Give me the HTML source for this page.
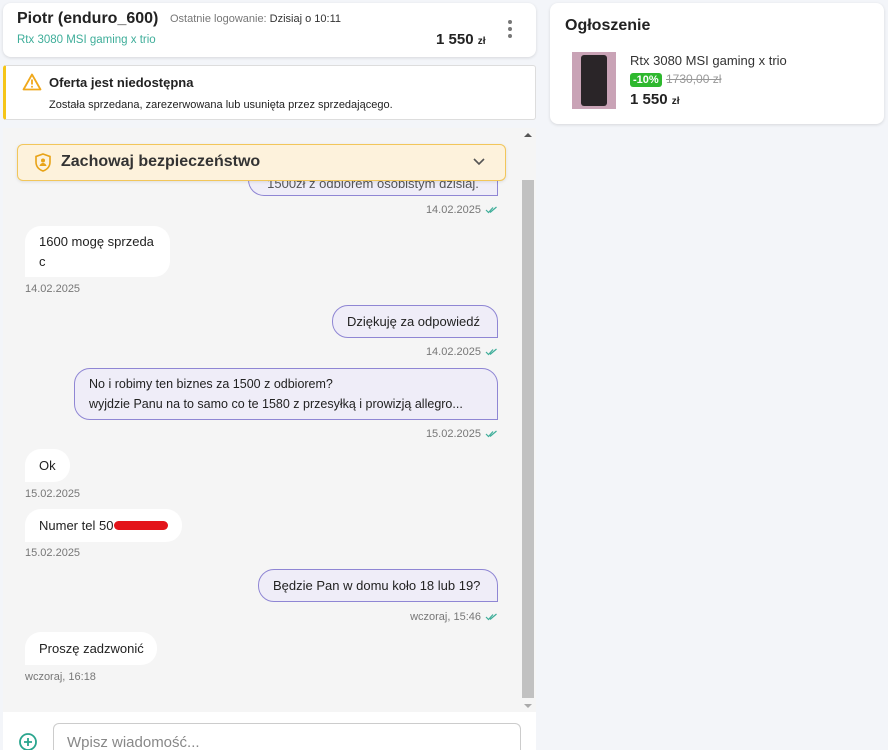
<!DOCTYPE html>
<html><head><meta charset="utf-8"><style>
*{box-sizing:border-box;margin:0;padding:0}
html{width:888px;height:750px;overflow:hidden}
body{width:888px;height:750px;background:#f3f5f9;font-family:"Liberation Sans",sans-serif;color:#222;position:relative;overflow:hidden;font-size:14px}
.a{position:absolute;white-space:nowrap}
.card{background:#fff;border-radius:8px;box-shadow:0 1px 3px rgba(0,0,0,.12)}
.bl{position:absolute;white-space:nowrap;background:#fff;border-radius:16px 16px 16px 0;padding:0 14px;font-size:13px;line-height:20px;display:flex;align-items:center;color:#222}
.br{position:absolute;white-space:nowrap;background:#efedf8;border:1px solid #8f86d4;border-radius:16px 16px 0 16px;padding:0 14px;font-size:13px;line-height:20px;display:flex;align-items:center;color:#222}
.ts{position:absolute;font-size:11px;color:#777}
.tsr{position:absolute;font-size:11px;color:#777;text-align:right;width:200px}
.ck{display:inline-block;margin-left:4px;vertical-align:middle}
</style></head><body>
<div class="a card" style="left:3px;top:3px;width:533px;height:54px"></div>
<div class="a" style="left:17px;top:10px;font-size:16px;font-weight:bold;color:#222">Piotr (enduro_600)</div>
<div class="a" style="left:170px;top:13px;font-size:11px;color:#777">Ostatnie logowanie: <span style="color:#333">Dzisiaj o 10:11</span></div>
<div class="a" style="left:17px;top:34px;font-size:11.5px;color:#3fae9a">Rtx 3080 MSI gaming x trio</div>
<div class="a" style="left:436px;top:31px;font-size:15px;font-weight:bold">1 550 <span style="font-size:10px">zł</span></div>
<div class="a" style="left:508px;top:20px;width:4px;height:4px;border-radius:2px;background:#777;box-shadow:0 7px 0 #777,0 14px 0 #777"></div>

<div class="a" style="left:3px;top:65px;width:533px;height:55px;background:#fff;border:1px solid #ddd;border-left:3px solid #f5c518;border-radius:3px"></div>
<svg class="a" style="left:22px;top:73px" width="20" height="18" viewBox="0 0 20 18"><path d="M10 1.5L18.5 16.5H1.5Z" fill="none" stroke="#f0a81b" stroke-width="1.8" stroke-linejoin="round"/><path d="M10 6.5v5" stroke="#f0a81b" stroke-width="1.8"/><circle cx="10" cy="13.8" r="1" fill="#f0a81b"/></svg>
<div class="a" style="left:49px;top:75px;font-size:13px;font-weight:bold;color:#222">Oferta jest niedostępna</div>
<div class="a" style="left:49px;top:99px;font-size:11px;color:#222">Została sprzedana, zarezerwowana lub usunięta przez sprzedającego.</div>

<div class="a card" style="left:550px;top:3px;width:334px;height:121px"></div>
<div class="a" style="left:565px;top:17px;font-size:16px;font-weight:bold;color:#222">Ogłoszenie</div>
<div class="a" style="left:572px;top:52px;width:44px;height:57px;background:#c9a3b6"><div style="margin:3px 9px;width:26px;height:51px;background:#2a2528;border-radius:3px"></div></div>
<div class="a" style="left:630px;top:53px;font-size:13px;color:#333">Rtx 3080 MSI gaming x trio</div>
<div class="a" style="left:630px;top:73px;background:#2eb82e;color:#fff;font-size:11px;font-weight:bold;padding:0 3px;border-radius:3px;line-height:14px">-10%</div>
<div class="a" style="left:666px;top:72px;font-size:12px;color:#999;text-decoration:line-through">1730,00 zł</div>
<div class="a" style="left:630px;top:91px;font-size:15px;font-weight:bold">1 550 <span style="font-size:10px">zł</span></div>

<div class="a" style="left:3px;top:128px;width:533px;height:584px;background:#f5f5f5"></div>
<div class="a" style="left:522px;top:180px;width:12px;height:518px;background:#c1c1c1"></div>
<div class="a" style="left:524px;top:133px;width:0;height:0;border:4px solid transparent;border-bottom-color:#555;border-top:0"></div>
<div class="a" style="left:524px;top:704px;width:0;height:0;border:4px solid transparent;border-top-color:#aaa;border-bottom:0"></div>

<div class="br" style="left:248px;top:165px;width:250px;height:31px;border-top:none;border-radius:0 0 0 16px;justify-content:center;color:#555;padding-top:8px">1500zł z odbiorem osobistym dzisiaj.</div>
<div class="tsr" style="left:298px;top:204px">14.02.2025<svg class="ck" width="13" height="8" viewBox="0 0 13 8"><path d="M1 4l2.5 2.5L8 1.5M5 6.5L11.5 1" stroke="#3fae9a" fill="none" stroke-width="1.2"/></svg></div>

<div class="a" style="left:17px;top:144px;width:489px;height:37px;background:#fdf2dc;border:1px solid #f2c65a;border-radius:6px;box-shadow:0 1px 3px rgba(0,0,0,.1)"></div>
<svg class="a" style="left:35px;top:153px" width="16" height="19" viewBox="0 0 16 19"><path d="M8 1L15 3.5V9c0 4.5-3 7.5-7 9C4 16.5 1 13.5 1 9V3.5Z" fill="none" stroke="#e8a317" stroke-width="1.6"/><circle cx="8" cy="7.5" r="2" fill="#e8a317"/><path d="M4.5 13c.5-2 2-3 3.5-3s3 1 3.5 3z" fill="#e8a317"/></svg>
<div class="a" style="left:61px;top:153px;font-size:16px;font-weight:bold;color:#333">Zachowaj bezpieczeństwo</div>
<svg class="a" style="left:472px;top:157px" width="14" height="9" viewBox="0 0 14 9"><path d="M2 2l5 5 5-5" stroke="#555" fill="none" stroke-width="1.6"/></svg>

<div class="bl" style="left:25px;top:226px;width:145px;height:51px;line-height:20px">1600 mogę sprzeda<br>c</div>
<div class="ts" style="left:25px;top:283px">14.02.2025</div>

<div class="br" style="left:332px;top:305px;width:166px;height:33px">Dziękuję za odpowiedź</div>
<div class="tsr" style="left:298px;top:346px">14.02.2025<svg class="ck" width="13" height="8" viewBox="0 0 13 8"><path d="M1 4l2.5 2.5L8 1.5M5 6.5L11.5 1" stroke="#3fae9a" fill="none" stroke-width="1.2"/></svg></div>

<div class="br" style="left:74px;top:368px;width:424px;height:52px;line-height:20px;font-size:12.5px">No i robimy ten biznes za 1500 z odbiorem?<br>wyjdzie Panu na to samo co te 1580 z przesyłką i prowizją allegro...</div>
<div class="tsr" style="left:298px;top:428px">15.02.2025<svg class="ck" width="13" height="8" viewBox="0 0 13 8"><path d="M1 4l2.5 2.5L8 1.5M5 6.5L11.5 1" stroke="#3fae9a" fill="none" stroke-width="1.2"/></svg></div>

<div class="bl" style="left:25px;top:449px;width:45px;height:33px">Ok</div>
<div class="ts" style="left:25px;top:488px">15.02.2025</div>

<div class="bl" style="left:25px;top:509px;width:157px;height:33px">Numer tel 50<span style="display:inline-block;width:55px;height:9px;background:#e3141a;border-radius:5px;margin-left:1px"></span></div>
<div class="ts" style="left:25px;top:547px">15.02.2025</div>

<div class="br" style="left:258px;top:569px;width:240px;height:33px">Będzie Pan w domu koło 18 lub 19?</div>
<div class="tsr" style="left:298px;top:611px">wczoraj, 15:46<svg class="ck" width="13" height="8" viewBox="0 0 13 8"><path d="M1 4l2.5 2.5L8 1.5M5 6.5L11.5 1" stroke="#3fae9a" fill="none" stroke-width="1.2"/></svg></div>

<div class="bl" style="left:25px;top:632px;width:132px;height:33px">Proszę zadzwonić</div>
<div class="ts" style="left:25px;top:671px">wczoraj, 16:18</div>

<div class="a" style="left:3px;top:712px;width:533px;height:38px;background:#fff"></div>
<svg class="a" style="left:18px;top:732px" width="20" height="20" viewBox="0 0 20 20"><circle cx="10" cy="10" r="8" fill="none" stroke="#2aa58e" stroke-width="1.8"/><path d="M10 6v8M6 10h8" stroke="#2aa58e" stroke-width="1.8"/></svg>
<div class="a" style="left:53px;top:723px;width:468px;height:27px;border:1px solid #ccc;border-bottom:none;border-radius:6px 6px 0 0;background:#fff"></div>
<div class="a" style="left:67px;top:734px;font-size:15px;color:#888">Wpisz wiadomość...</div>
</body></html>
